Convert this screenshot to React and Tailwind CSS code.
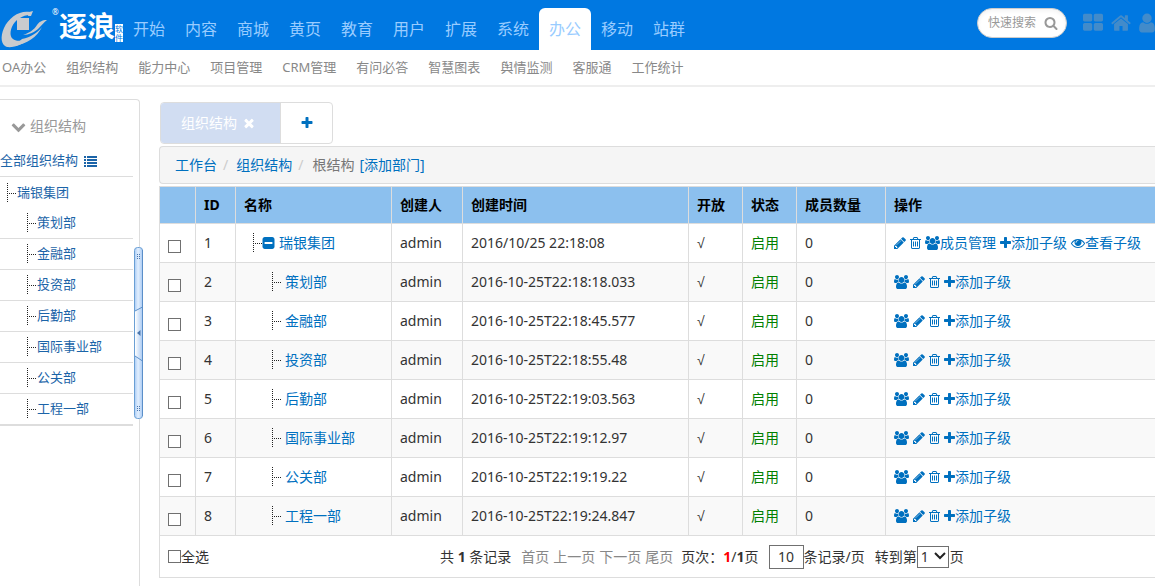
import React from "react";

const paths = {
  plus: "M1600 736v192q0 40-28 68t-68 28h-416v416q0 40-28 68t-68 28h-192q-40 0-68-28t-28-68v-416h-416q-40 0-68-28t-28-68v-192q0-40 28-68t68-28h416v-416q0-40 28-68t68-28h192q40 0 68 28t28 68v416h416q40 0 68 28t28 68z",
  pencil: "M491 1536l91-91-235-235-91 91v107h128v128h107zm523-928q0-22-22-22-10 0-17 7l-542 542q-7 7-7 17 0 22 22 22 10 0 17-7l542-542q7-7 7-17zm-54-192l416 416-832 832h-416v-416zm683 96q0 53-37 90l-166 166-416-416 166-165q36-38 90-38 53 0 91 38l235 234q37 39 37 91z",
  trash: "M704 736v576q0 14-9 23t-23 9h-64q-14 0-23-9t-9-23v-576q0-14 9-23t23-9h64q14 0 23 9t9 23zm256 0v576q0 14-9 23t-23 9h-64q-14 0-23-9t-9-23v-576q0-14 9-23t23-9h64q14 0 23 9t9 23zm256 0v576q0 14-9 23t-23 9h-64q-14 0-23-9t-9-23v-576q0-14 9-23t23-9h64q14 0 23 9t9 23zm128 724v-948h-896v948q0 22 7 40.5t14.5 27 10.5 8.5h832q3 0 10.5-8.5t14.5-27 7-40.5zm-672-1076h448l-48-117q-7-9-17-11h-317q-10 2-17 11zm928 32v64q0 14-9 23t-23 9h-96v948q0 83-47 143.5t-113 60.5h-832q-66 0-113-58.5t-47-141.5v-952h-96q-14 0-23-9t-9-23v-64q0-14 9-23t23-9h309l70-167q15-37 54-63t79-26h320q40 0 79 26t54 63l70 167h309q14 0 23 9t9 23z",
  users: "M593 896q-162 5-265 128h-134q-82 0-138-40.5t-56-118.5q0-353 124-353 6 0 43.5 21t97.5 42.5 119 21.5q67 0 133-23-5 37-5 66 0 139 81 256zm1071 637q0 120-73 189.5t-194 69.5h-874q-121 0-194-69.5t-73-189.5q0-53 3.5-103.5t14-109 26.5-108.5 43-97.5 62-81 85.5-53.5 111.5-20q10 0 43 21.5t73 48 107 48 135 21.5 135-21.5 107-48 73-48 43-21.5q61 0 111.5 20t85.5 53.5 62 81 43 97.5 26.5 108.5 14 109 3.5 103.5zm-1024-1277q0 106-75 181t-181 75-181-75-75-181 75-181 181-75 181 75 75 181zm704 384q0 159-112.5 271.5t-271.5 112.5-271.5-112.5-112.5-271.5 112.5-271.5 271.5-112.5 271.5 112.5 112.5 271.5zm576 225q0 78-56 118.5t-138 40.5h-134q-103-123-265-128 81-117 81-256 0-29-5-66 66 23 133 23 59 0 119-21.5t97.5-42.5 43.5-21q124 0 124 353zm-128-609q0 106-75 181t-181 75-181-75-75-181 75-181 181-75 181 75 75 181z",
  eye: "M1664 960q-152-236-381-353 61 104 61 225 0 185-131.5 316.5t-316.5 131.5-316.5-131.5-131.5-316.5q0-121 61-225-229 117-381 353 133 205 333.5 326.5t434.5 121.5 434.5-121.5 333.5-326.5zm-720-384q0-20-14-34t-34-14q-125 0-214.5 89.5t-89.5 214.5q0 20 14 34t34 14 34-14 14-34q0-86 61-147t147-61q20 0 34-14t14-34zm848 384q0 34-20 69-140 230-376.5 368.5t-499.5 138.5-499.5-139-376.5-368q-20-35-20-69t20-69q140-229 376.5-368t499.5-139 499.5 139 376.5 368q20 35 20 69z",
  minusSquare: "M1408 960v-128q0-26-19-45t-45-19h-896q-26 0-45 19t-19 45v128q0 26 19 45t45 19h896q26 0 45-19t19-45zm256-544v960q0 119-84.5 203.5t-203.5 84.5h-960q-119 0-203.5-84.5t-84.5-203.5v-960q0-119 84.5-203.5t203.5-84.5h960q119 0 203.5 84.5t84.5 203.5z",
  search: "M1216 832q0-185-131.5-316.5t-316.5-131.5-316.5 131.5-131.5 316.5 131.5 316.5 316.5 131.5 316.5-131.5 131.5-316.5zm512 832q0 52-38 90t-90 38q-54 0-90-38l-343-342q-179 124-399 124-143 0-273.5-55.5t-225-150-150-225-55.5-273.5 55.5-273.5 150-225 225-150 273.5-55.5 273.5 55.5 225 150 150 225 55.5 273.5q0 220-124 399l343 343q37 37 37 90z",
  home: "M1472 992v480q0 26-19 45t-45 19h-384v-384h-256v384h-384q-26 0-45-19t-19-45v-480q0-1 .5-3t.5-3l575-474 575 474q1 2 1 6zm223-69l-62 74q-8 9-21 11h-3q-13 0-21-7l-692-577-692 577q-12 8-24 7-13-2-21-11l-62-74q-8-10-7-23.5t11-21.5l719-599q32-26 76-26t76 26l244 204v-195q0-14 9-23t23-9h192q14 0 23 9t9 23v408l219 182q10 8 11 21.5t-7 23.5z",
  thLarge: "M832 1024v384q0 52-38 90t-90 38h-512q-52 0-90-38t-38-90v-384q0-52 38-90t90-38h512q52 0 90 38t38 90zm0-768v384q0 52-38 90t-90 38h-512q-52 0-90-38t-38-90v-384q0-52 38-90t90-38h512q52 0 90 38t38 90zm896 768v384q0 52-38 90t-90 38h-512q-52 0-90-38t-38-90v-384q0-52 38-90t90-38h512q52 0 90 38t38 90zm0-768v384q0 52-38 90t-90 38h-512q-52 0-90-38t-38-90v-384q0-52 38-90t90-38h512q52 0 90 38t38 90z",
  user: "M1536 1399q0 109-62.5 187t-150.5 78h-854q-88 0-150.5-78t-62.5-187q0-85 8.5-160.5t31.5-152 58.5-131 94-89 134.5-34.5q131 128 313 128t313-128q76 0 134.5 34.5t94 89 58.5 131 31.5 152 8.5 160.5zm-256-887q0 159-112.5 271.5t-271.5 112.5-271.5-112.5-112.5-271.5 112.5-271.5 271.5-112.5 271.5 112.5 112.5 271.5z",
  times: "M1490 1322q0 40-28 68l-136 136q-28 28-68 28t-68-28l-294-294-294 294q-28 28-68 28t-68-28l-136-136q-28-28-28-68t28-68l294-294-294-294q-28-28-28-68t28-68l136-136q28-28 68-28t68 28l294 294 294-294q28-28 68-28t68 28l136 136q28 28 28 68t-28 68l-294 294 294 294q28 28 28 68z",
  chevronDown: "M1683 808l-742 741q-19 19-45 19t-45-19l-742-741q-19-19-19-45.5t19-45.5l166-165q19-19 45-19t45 19l531 531 531-531q19-19 45-19t45 19l166 165q19 19 19 45.5t-19 45.5z",
};

function Icon({ name, box = "0 0 1792 1792", className = "h-3.5 w-3.5" }) {
  return (
    <svg viewBox={box} className={"shrink-0 " + className} fill="currentColor" aria-hidden="true">
      <path d={paths[name]} />
    </svg>
  );
}

const Pencil = () => <Icon name="pencil" box="128 0 1536 1792" className="h-3.5 w-3" />;
const Trash = () => <Icon name="trash" box="192 0 1408 1792" className="h-3.5 w-[11px]" />;
const Users = () => <Icon name="users" box="0 0 1920 1792" className="h-3.5 w-[15px]" />;
const Plus = () => <Icon name="plus" box="192 0 1408 1792" className="h-3.5 w-[11px]" />;

function Branch() {
  return (
    <svg width="9" height="20" viewBox="0 0 9 20" className="shrink-0" aria-hidden="true" stroke="#222" shapeRendering="crispEdges">
      <path d="M0.5 0V20" strokeDasharray="1 1" />
      <path d="M2 10.5H9" strokeDasharray="1 1" />
    </svg>
  );
}

function Logo() {
  return (
    <a href="#" aria-label="逐浪软件" className="flex h-[50px] shrink-0 text-white">
      <svg width="50" height="50" viewBox="0 0 50 50" className="shrink-0" aria-hidden="true">
        <g fill="#c9cbce">
          <path d="M30 12C20 10 9 17 4 28 0 37 1 45 7 47c7 1 17-3 24-9-7 3-15 4-18 1-4-3-3-11 2-17l2-2v10h12V18H20c3-2 6-3 10-3z" />
          <path d="M29 12l4-1-2 5h-3z" />
          <path d="M47 20c-5 0-8 2-10 5-3 5-8 8-14 10 6 0 12-3 16-7 3-3 5-6 8-8z" />
          <path d="M42 27c-5 6-11 10-20 12l-8 7c13-2 23-9 28-19z" />
        </g>
      </svg>
      <span className="ml-0.5 w-[7px] pt-[7px] text-[8px] leading-[10px]">®</span>
      <span className="text-[28px] leading-[52px] font-bold">逐浪</span>
      <span className="mt-6 flex w-2 flex-col items-center self-start bg-white text-[8px] leading-[9px] text-[#0078e1]">
        <span>软</span>
        <span>件</span>
      </span>
    </a>
  );
}

const mainNav = ["开始", "内容", "商城", "黄页", "教育", "用户", "扩展", "系统", "办公", "移动", "站群"];
const subNav = ["OA办公", "组织结构", "能力中心", "项目管理", "CRM管理", "有问必答", "智慧图表", "舆情监测", "客服通", "工作统计"];
const departments = ["策划部", "金融部", "投资部", "后勤部", "国际事业部", "公关部", "工程一部"];
const rows = [
  ["瑞银集团", "2016/10/25 22:18:08"],
  ["策划部", "2016-10-25T22:18:18.033"],
  ["金融部", "2016-10-25T22:18:45.577"],
  ["投资部", "2016-10-25T22:18:55.48"],
  ["后勤部", "2016-10-25T22:19:03.563"],
  ["国际事业部", "2016-10-25T22:19:12.97"],
  ["公关部", "2016-10-25T22:19:19.22"],
  ["工程一部", "2016-10-25T22:19:24.847"],
];
const columns = [
  ["", "w-9"],
  ["ID", "w-10"],
  ["名称", "w-[156px]"],
  ["创建人", "w-[71px]"],
  ["创建时间", "w-[226px]"],
  ["开放", "w-[54px]"],
  ["状态", "w-[54px]"],
  ["成员数量", "w-[89px]"],
  ["操作", ""],
];

const checkClass = "h-[13px] w-[13px] shrink-0 appearance-none border border-[#707070] bg-white checked:bg-[#0070bf]";

function Header() {
  return (
    <header>
      <div className="flex h-[50px] items-center bg-[#0078e1]">
        <Logo />
        <nav className="flex h-full items-end">
          {mainNav.map((t) => (
            <a
              key={t}
              href="#"
              className={
                "h-[42px] w-[52px] text-center text-base leading-[42px] text-[#99ccff] " +
                (t === "办公" ? "rounded-t-md bg-white" : "")
              }
            >
              {t}
            </a>
          ))}
        </nav>
        <div className="ml-auto flex items-center self-start pt-2">
          <form className="flex h-[30px] w-[90px] items-center rounded-full border border-[#ccc] bg-white pr-2 pl-2.5 shadow-inner">
            <input
              aria-label="快速搜索"
              placeholder="快速搜索"
              className="w-0 min-w-0 flex-1 bg-transparent text-xs text-[#555] outline-none placeholder:text-[#999]"
            />
            <button type="button" aria-label="搜索" className="text-[#999]">
              <Icon name="search" className="h-3.5 w-3.5" />
            </button>
          </form>
          <div className="ml-4 flex items-center gap-2 text-[#428bca]">
            <a href="#" aria-label="应用"><Icon name="thLarge" box="64 0 1664 1792" className="h-[22px] w-5" /></a>
            <a href="#" aria-label="首页"><Icon name="home" box="64 0 1664 1792" className="h-[22px] w-5" /></a>
            <a href="#" aria-label="用户"><Icon name="user" box="256 0 1280 1792" className="h-[22px] w-4" /></a>
          </div>
        </div>
      </div>
      <nav className="flex h-[37px] items-center gap-5 border-b-2 border-[#eee] pl-0.5 text-[13px] text-[#888]">
        {subNav.map((t) => (
          <a key={t} href="#" className="whitespace-nowrap">{t}</a>
        ))}
      </nav>
    </header>
  );
}

function Splitter() {
  return (
    <button type="button" aria-label="折叠" className="absolute top-[147px] -right-[4px] h-[172px] w-[9px]">
      <svg width="9" height="172" viewBox="0 0 9 172" aria-hidden="true">
        <defs>
          <linearGradient id="bar">
            <stop offset="0" stopColor="#a9cbf5" />
            <stop offset="0.45" stopColor="#e2effe" />
            <stop offset="1" stopColor="#a9caf3" />
          </linearGradient>
          <linearGradient id="grip">
            <stop offset="0" stopColor="#ffffff" />
            <stop offset="1" stopColor="#a9caf3" />
          </linearGradient>
        </defs>
        <rect x="0.5" y="0.5" width="8" height="171" rx="3" fill="url(#bar)" stroke="#6a9fd4" />
        <path d="M8.500 60L1 64V109L8.500 114Z" fill="url(#grip)" />
        <path d="M8.500 60L1 64M1 109L8.500 114M8.500 3V169" fill="none" stroke="#5b8fc9" />
        <path d="M6.500 83v6l-3.500-3z" fill="#4a76ad" />
        <g stroke="#4a76ad" shapeRendering="crispEdges">
          <path d="M3 7.500h1m1 0h1M3 9.500h1m1 0h1M3 11.500h1m1 0h1M3 159.500h1m1 0h1M3 161.500h1m1 0h1M3 163.500h1m1 0h1" />
        </g>
      </svg>
    </button>
  );
}

function Sidebar() {
  return (
    <aside className="relative mt-3 w-[140px] shrink-0 rounded-tr border-t border-r border-[#ddd] text-[13px] text-[#1b64a8]">
      <button type="button" className="mt-[11px] flex h-[30px] items-center gap-1 pl-[11px] text-sm text-[#999]">
        <Icon name="chevronDown" className="h-[15px] w-[15px]" />
        组织结构
      </button>
      <div className="mr-1.5 border-b-2 border-[#ddd] pt-[5px]">
        <a href="#" className="flex h-[31px] items-center gap-1.5 border-b border-[#ddd] whitespace-nowrap">
          <span>全部组织结构</span>
          <svg width="13" height="11" viewBox="0 0 13 11" fill="currentColor" aria-hidden="true">
            <path d="M0 0h2v2H0zM3 0h10v2H3zM0 3h2v2H0zM3 3h10v2H3zM0 6h2v2H0zM3 6h10v2H3zM0 9h2v2H0zM3 9h10v2H3z" />
          </svg>
        </a>
        <a href="#" className="flex h-[31px] items-center gap-px pl-[7px]"><Branch />瑞银集团</a>
        <ul className="divide-y divide-[#ddd]">
          {departments.map((d) => (
            <li key={d}>
              <a href="#" className="flex h-[30px] items-center gap-px pl-[27px]"><Branch />{d}</a>
            </li>
          ))}
        </ul>
      </div>
      <Splitter />
    </aside>
  );
}

function Actions({ root }) {
  if (root) {
    return (
      <div className="flex items-center gap-1 whitespace-nowrap text-[#0070bf]">
        <a href="#" aria-label="编辑"><Pencil /></a>
        <a href="#" aria-label="删除"><Trash /></a>
        <a href="#" className="flex items-center"><Users />成员管理</a>
        <a href="#" className="flex items-center"><Plus />添加子级</a>
        <a href="#" className="flex items-center"><Icon name="eye" />查看子级</a>
      </div>
    );
  }
  return (
    <div className="flex items-center gap-1 whitespace-nowrap text-[#0070bf]">
      <a href="#" aria-label="成员"><Users /></a>
      <a href="#" aria-label="编辑"><Pencil /></a>
      <a href="#" aria-label="删除"><Trash /></a>
      <a href="#" className="flex items-center"><Plus />添加子级</a>
    </div>
  );
}

function OrgTable() {
  return (
    <table className="w-full table-fixed border-collapse border border-r-0 border-[#ddd] text-sm text-[#333]">
      <thead>
        <tr className="h-[37px] bg-[#8cc0ee] text-left text-black">
          {columns.map(([label, width], i) => (
            <th key={i} className={"border border-r-0 border-[#ddd] px-2 whitespace-nowrap " + width}>{label}</th>
          ))}
        </tr>
      </thead>
      <tbody>
        {rows.map(([name, time], i) => (
          <tr key={name} className="h-[39px] odd:bg-white even:bg-[#f9f9f9] [&>td]:border [&>td]:border-r-0 [&>td]:border-[#ddd] [&>td]:px-2">
            <td><input type="checkbox" aria-label={"选择" + name} className={"mt-1.5 block " + checkClass} /></td>
            <td>{i + 1}</td>
            <td>
              {i === 0 ? (
                <a href="#" className="flex items-center pl-[9px] text-[#0070bf]">
                  <Branch />
                  <Icon name="minusSquare" box="128 0 1536 1792" className="mr-1 h-3.5 w-[13px]" />
                  {name}
                </a>
              ) : (
                <a href="#" className="flex items-center gap-1 pl-7 text-[#0070bf]"><Branch />{name}</a>
              )}
            </td>
            <td>admin</td>
            <td>{time}</td>
            <td className="font-['Liberation_Sans','DejaVu_Sans',sans-serif]">√</td>
            <td className="text-[#008000]">启用</td>
            <td>0</td>
            <td><Actions root={i === 0} /></td>
          </tr>
        ))}
      </tbody>
      <tfoot>
        <tr className="h-[42px]">
          <td colSpan={9} className="px-2">
            <div className="flex items-center whitespace-nowrap">
              <label className="flex w-[272px] items-center"><input type="checkbox" className={checkClass} />全选</label>
              <span>共 <b>1</b> 条记录</span>
              <span className="ml-2.5 flex gap-1 text-[#888]">
                <a href="#">首页</a><a href="#">上一页</a><a href="#">下一页</a><a href="#">尾页</a>
              </span>
              <span className="ml-2">页次：<b className="text-[#f00]">1</b>/<b>1</b>页</span>
              <input aria-label="每页条数" defaultValue="10" className="ml-2.5 h-6 w-[35px] border border-[#707070] bg-white text-center" />
              <span>条记录/页</span>
              <label className="ml-2.5 flex items-center">
                转到第
                <span className="relative mr-px flex items-center">
                  <select aria-label="页码" className="h-[22px] w-8 appearance-none border border-[#707070] bg-white pl-[3px]">
                    <option>1</option>
                  </select>
                  <svg width="12" height="9" viewBox="0 0 12 9" className="pointer-events-none absolute right-[3px]" fill="none" stroke="#222" strokeWidth="2" aria-hidden="true">
                    <path d="M1 1l5 5 5-5" />
                  </svg>
                </span>
                页
              </label>
            </div>
          </td>
        </tr>
      </tfoot>
    </table>
  );
}

export default function App() {
  return (
    <div className="flex min-h-screen flex-col overflow-x-hidden bg-white font-['Noto_Sans','Noto_Sans_CJK_SC',sans-serif]">
      <Header />
      <div className="flex flex-1">
        <Sidebar />
        <main className="min-w-0 flex-1 pt-[15px] pl-[19px]">
          <div className="ml-px flex h-[42px] w-[173px] overflow-hidden rounded border border-[#ddd]">
            <div className="flex flex-1 items-center bg-[#d1ddf2] pl-5 text-sm text-white">
              <a href="#">组织结构</a>
              <button type="button" aria-label="关闭" className="ml-[5px]"><Icon name="times" /></button>
            </div>
            <button type="button" aria-label="新建" className="flex w-[52px] items-center justify-center border-l border-[#ddd] text-[#0070bf]">
              <Icon name="plus" className="h-3.5 w-3.5" />
            </button>
          </div>
          <nav className="mt-0.5 mb-0.5 flex h-[38px] items-center rounded-l border border-r-0 border-[#ddd] bg-[#f5f5f5] pl-[15px] text-sm text-[#0070bf]">
            <a href="#">工作台</a>
            <span className="px-1.5 text-[#ccc]">/</span>
            <a href="#" className="pl-0.5">组织结构</a>
            <span className="px-1.5 text-[#ccc]">/</span>
            <span className="pl-[3px] text-[#777]">根结构</span>
            <a href="#" className="pl-[5px]">[添加部门]</a>
          </nav>
          <OrgTable />
        </main>
      </div>
    </div>
  );
}
